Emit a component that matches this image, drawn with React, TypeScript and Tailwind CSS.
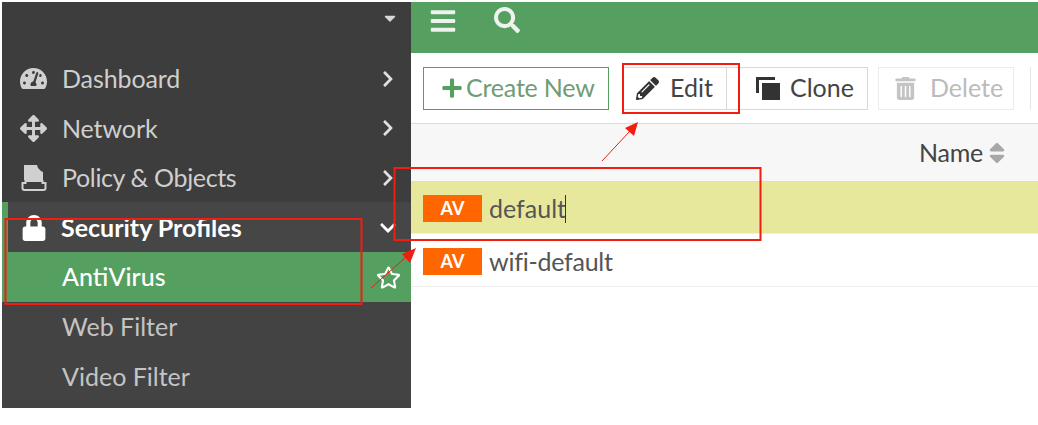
import { FaBars, FaSearch, FaPlus, FaTrashAlt, FaLock, FaArrowsAlt, FaTachometerAlt, FaChevronRight, FaChevronDown, FaRegStar, FaCaretDown, FaPencilAlt, FaSort } from "react-icons/fa";

const font = "font-['Lato','Open_Sans',sans-serif]";

function PolicyIcon() {
  return (
    <svg viewBox="0 0 28 28" className="w-[28px] h-[28px]" fill="#d0d0d0">
      <path d="M4 1h13l1 3 3 3 2 1v8H4z" />
      <path d="M2.5 19h3v-2h17v2h3v5a2 2 0 0 1-2 2h-19a2 2 0 0 1-2-2z" fill="none" stroke="#d0d0d0" strokeWidth="2" />
    </svg>
  );
}

function CloneIcon() {
  return (
    <svg viewBox="0 0 24 23" className="w-[24px] h-[23px] mr-[10px]" fill="#333">
      <path d="M0 0h19v3H3v13H0z" />
      <path d="M6 6h18v17H6z" />
    </svg>
  );
}

function NavRow({ icon, label, arrow, narrow }: { icon: React.ReactNode; label: string; arrow?: boolean; narrow?: boolean }) {
  return (
    <div className="h-[49.5px] pt-[2px] flex items-center text-[25px] text-[#cfcfcf]">
      <div className="w-[60px] pl-[18px] flex items-center">{icon}</div>
      <span className={narrow ? "flex-1 tracking-[-0.35px]" : "flex-1 tracking-[-0.1px]"}>{label}</span>
      {arrow ? <FaChevronRight className="text-[#e0e0e0] text-[18px] mr-[14px]" /> : null}
    </div>
  );
}

function SubRow({ label }: { label: string }) {
  return <div className="h-[49.5px] pt-[1px] flex items-center pl-[60px] text-[25px] text-[#c4c4c4]">{label}</div>;
}

function Badge() {
  return (
    <span className="w-[59px] h-[27px] bg-[#ff6600] text-white text-[18px] font-bold flex items-center justify-center">AV</span>
  );
}

function Sidebar() {
  return (
    <aside className="w-[409px] bg-[#3d3d3d] flex flex-col shrink-0">
      <div className="h-[51px] flex justify-end pr-[12px] pt-[7px] text-[#d8d8d8] text-[18px]">
        <FaCaretDown />
      </div>
      <NavRow icon={<FaTachometerAlt className="text-[#d0d0d0] text-[27px]" />} label="Dashboard" arrow />
      <NavRow icon={<FaArrowsAlt className="text-[#d0d0d0] text-[27px]" />} label="Network" arrow />
      <NavRow icon={<PolicyIcon />} label="Policy & Objects" arrow narrow />
      <div className="h-[50px] pt-[2px] flex items-center bg-[#464646] border-l-[6px] border-[#559f60] text-white text-[25px] font-bold">
        <div className="w-[53px] pl-[13px]">
          <FaLock className="text-white text-[26px]" />
        </div>
        <span className="flex-1">Security Profiles</span>
        <FaChevronDown className="text-white text-[18px] mr-[14px]" />
      </div>
      <div className="h-[50px] pt-[1px] flex items-center bg-[#559f60] pl-[60px] text-white text-[25px] font-medium">
        <span className="flex-1">AntiVirus</span>
        <FaRegStar className="text-white text-[25px] mr-[10px]" />
      </div>
      <div className="flex-1 bg-[#434343]">
        <SubRow label="Web Filter" />
        <SubRow label="Video Filter" />
      </div>
    </aside>
  );
}

function Toolbar() {
  return (
    <div className="h-[70px] flex items-center pl-[12px] bg-white text-[25px]">
      <div className="w-[186px] h-[43px] border border-[#559f60] flex items-center pl-[17px] text-[#6f9c75] tracking-[-0.2px]">
        <FaPlus className="text-[#559f60] text-[22px] mr-[3px]" />
        Create New
      </div>
      <div className="w-[105px] h-[43px] ml-[13px] border border-[#d9d9d9] flex items-center pl-[13px] text-[#444]">
        <FaPencilAlt className="text-[#333] text-[23px] mr-[11px]" />
        Edit
      </div>
      <div className="w-[141px] h-[43px] border border-[#d9d9d9] border-l-0 flex items-center pl-[29px] text-[#444]">
        <CloneIcon />
        Clone
      </div>
      <div className="w-[136px] h-[43px] ml-[10px] border border-[#ececec] flex items-center pl-[15px] text-[#bbb]">
        <FaTrashAlt className="text-[#c4c4c4] text-[23px] mr-[13px]" />
        Delete
      </div>
      <div className="w-px h-[43px] bg-[#e6e6e6] ml-[16px]" />
    </div>
  );
}

function Annotations() {
  return (
    <svg className="absolute left-0 top-0 w-[1038px] h-[425px] pointer-events-none" viewBox="0 0 1038 425" fill="none" stroke="#f01d10" strokeWidth="2">
      <rect x="623" y="64" width="116" height="49" />
      <rect x="394.5" y="168" width="366" height="72" />
      <rect x="5.5" y="219" width="356" height="85" />
      <path d="M602 161 L630 131" strokeWidth="1" />
      <path d="M638 122 L625 128 L634 136 Z" fill="#f01d10" stroke="none" />
      <path d="M371 288 L406 257" strokeWidth="1" />
      <path d="M416 248 L402 254 L410 263 Z" fill="#f01d10" stroke="none" />
    </svg>
  );
}

export default function App() {
  return (
    <div className={`relative w-[1038px] h-[425px] overflow-hidden bg-white pl-[2px] pt-[2px] ${font}`}>
      <div className="flex h-[406px]">
        <Sidebar />
        <main className="flex-1 flex flex-col">
          <div className="h-[51px] bg-[#559f60] flex items-start pl-[18px] pt-[5px] gap-[37px] text-[#eef3ee]">
            <FaBars className="text-[28px]" />
            <FaSearch className="text-[26px]" />
          </div>
          <Toolbar />
          <div className="h-[59px] bg-[#f7f7f7] border-y border-[#dcdcdc] flex items-center justify-end pr-[30px] text-[25px] text-[#444]">
            <span className="tracking-[-0.2px]">Name</span>
            <FaSort className="text-[#a8a8a8] text-[26px] ml-[1px] -mr-[2px]" />
          </div>
          <div className="h-[52px] pt-[2px] bg-[#e8e89c] border-b border-[#efefef] flex items-center pl-[12px] gap-[7px] text-[25px] text-[#555]">
            <Badge />
            <span className="flex items-center">
              default
              <span className="w-px h-[28px] bg-[#333] -ml-px" />
            </span>
          </div>
          <div className="h-[53px] pt-[3px] bg-white border-b border-[#eeeeee] flex items-center pl-[12px] gap-[7px] text-[25px] text-[#555]">
            <Badge />
            <span className="tracking-[-0.25px]">wifi-default</span>
          </div>
        </main>
      </div>
      <Annotations />
    </div>
  );
}
